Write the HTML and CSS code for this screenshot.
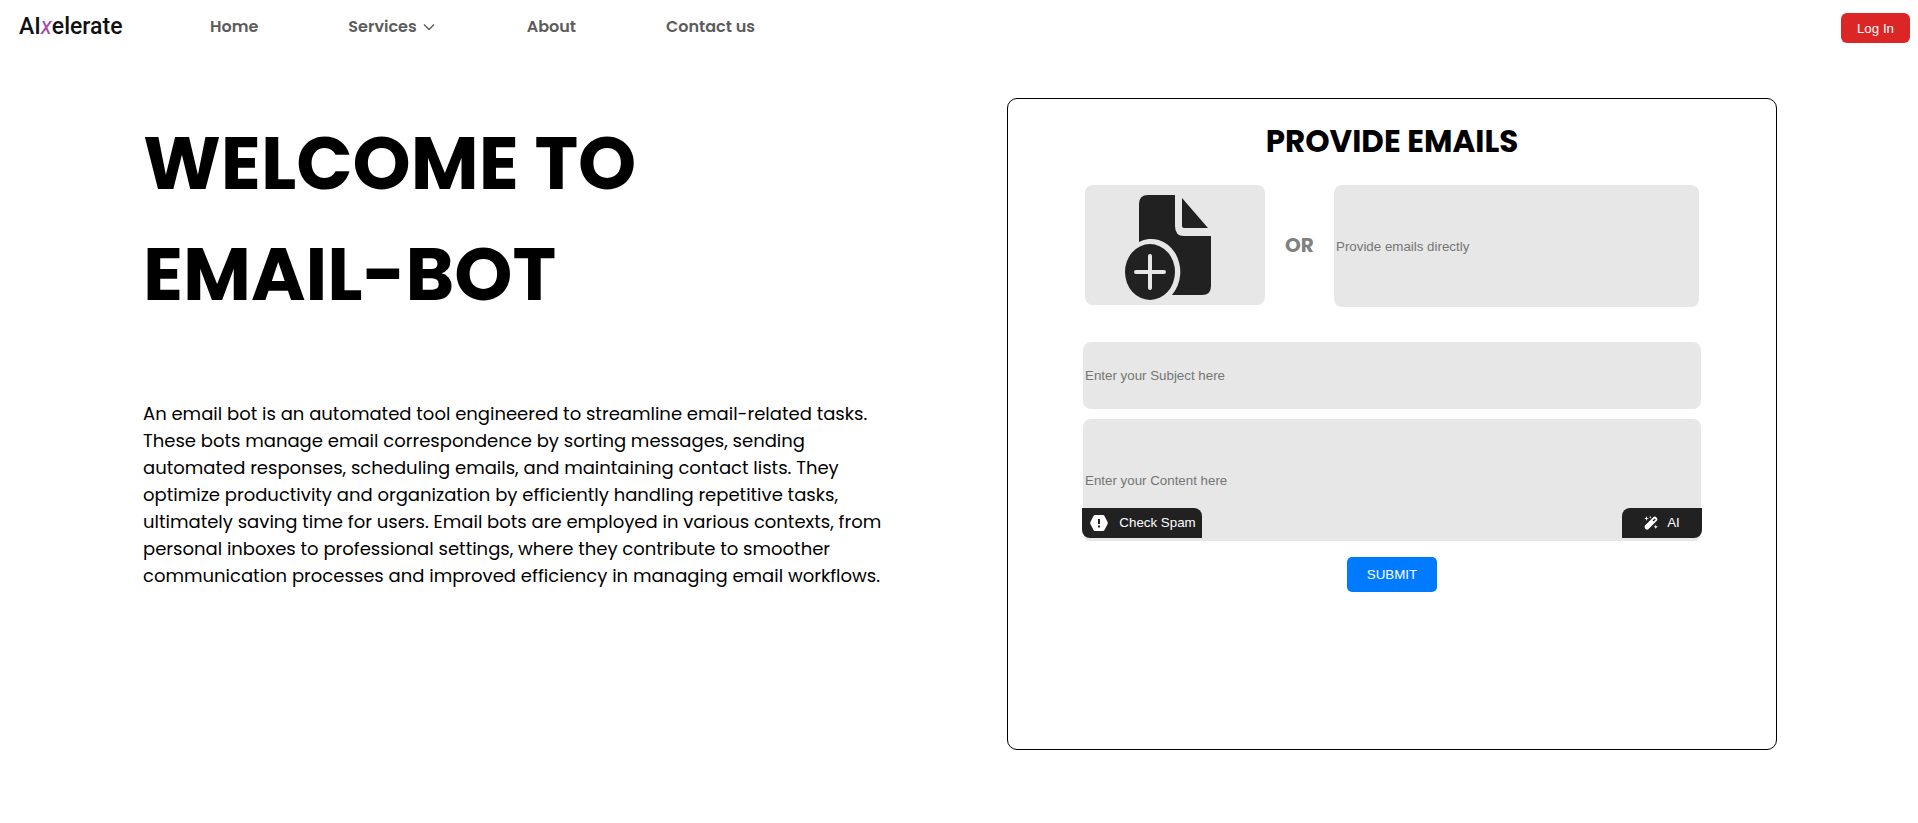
FILE: index.html
```html
<!DOCTYPE html>
<html lang="en">
<head>
<meta charset="utf-8">
<meta name="viewport" content="width=device-width, initial-scale=1">
<title>Email-Bot</title>
<link rel="stylesheet" href="styles.css">
</head>
<body>
<header class="header">
  <a class="logo" href="#">AI<span class="logo-x">x</span>elerate</a>
  <nav class="nav">
    <a href="#">Home</a>
    <a href="#" class="nav-menu">Services
      <svg class="chevron" viewBox="0 0 12 8" aria-hidden="true"><path d="M1 1.5 6 6.5 11 1.5" fill="none" stroke="currentColor" stroke-width="1.4"/></svg>
    </a>
    <a href="#">About</a>
    <a href="#">Contact us</a>
  </nav>
  <button class="login" type="button">Log In</button>
</header>
<main class="main">
  <section class="intro">
    <h1>WELCOME TO<br>EMAIL-BOT</h1>
    <p>An email bot is an automated tool engineered to streamline email-related tasks.<br>These bots manage email correspondence by sorting messages, sending<br>automated responses, scheduling emails, and maintaining contact lists. They<br>optimize productivity and organization by efficiently handling repetitive tasks,<br>ultimately saving time for users. Email bots are employed in various contexts, from<br>personal inboxes to professional settings, where they contribute to smoother<br>communication processes and improved efficiency in managing email workflows.</p>
  </section>
  <form class="card">
    <h2>PROVIDE EMAILS</h2>
    <div class="sources">
      <button class="upload" type="button" aria-label="Upload email file">
        <svg class="upload-icon" viewBox="0 0 87 107" aria-hidden="true">
          <path fill="#212121" d="M23 1H50V32Q50 42 59 42H86V92Q86 101 77 101H47A29 33 0 0 0 14 48V10Q14 1 23 1Z"/>
          <path fill="#212121" d="M57 4 83 34H59Q57 34 57 32Z"/>
          <ellipse cx="25" cy="78" rx="25" ry="28" fill="#212121"/>
          <path d="M25 62V94M11 78H39" stroke="#e7e7e7" stroke-width="4" stroke-linecap="round"/>
        </svg>
      </button>
      <span class="or">OR</span>
      <input class="field direct" type="text" placeholder="Provide emails directly" aria-label="Provide emails directly">
    </div>
    <input class="field subject" type="text" placeholder="Enter your Subject here" aria-label="Subject">
    <div class="content">
      <input class="field body" type="text" placeholder="Enter your Content here" aria-label="Content">
      <button class="tool spam" type="button">
        <svg class="spam-icon" viewBox="0 0 18 16" aria-hidden="true"><path fill="#fff" d="M5 0H13Q14 0 14.500 1L17.600 7Q18 8 17.600 9L14.500 15Q14 16 13 16H5Q4 16 3.500 15L.4 9Q0 8 .4 7L3.500 1Q4 0 5 0Z"/><path fill="#212121" d="M8 4H10V9H8ZM8 10.500H10V12.500H8Z"/></svg>
        Check Spam
      </button>
      <button class="tool ai" type="button">
        <svg class="wand-icon" viewBox="0 0 14 14" aria-hidden="true"><path fill="#fff" fill-rule="evenodd" d="M9.500 1Q11 0 12.500 1.500T13 4.500L4.500 13Q3 14.500 1.500 13T1 9.500ZM10.600 2.400 8.600 4.400 9.700 5.500 11.700 3.500Z"/><path fill="#fff" d="M2.500 0 3.100 1.900 5 2.500 3.100 3.100 2.500 5 1.900 3.100 0 2.500 1.900 1.900ZM11.800 8.500 12.300 10.200 14 10.800 12.300 11.400 11.800 13 11.200 11.400 9.500 10.800 11.200 10.200ZM6.200 0 6.600.8 7.400 1.200 6.600 1.600 6.200 2.400 5.800 1.600 5 1.200 5.800.8Z"/></svg>
        AI
      </button>
    </div>
    <button class="submit" type="submit">SUBMIT</button>
  </form>
</main>
</body>
</html>
```
FILE: styles.css
```css
* {
  box-sizing: border-box;
}

body {
  margin: 0;
  background: #fff;
  color: #000;
  font-family: Poppins, Inter, sans-serif;
}

button,
input {
  border: 0;
  font-family: "Liberation Sans", Arial, sans-serif;
}

button {
  padding: 0 0 1px;
  cursor: pointer;
}

.header {
  display: flex;
  align-items: center;
  height: 54px;
  padding: 0 8px 0 19px;
}

.logo {
  width: 191px;
  color: #111;
  font-family: Roboto, sans-serif;
  font-size: 23px;
  font-weight: 500;
  line-height: 28px;
  text-decoration: none;
}

.logo-x {
  color: #a349a4;
  font-style: italic;
  font-weight: 400;
}

.nav {
  display: flex;
  gap: 90px;
  margin-right: auto;
}

.nav a {
  color: #5c5c5c;
  font-size: 16px;
  font-weight: 600;
  line-height: 24px;
  text-decoration: none;
}

.nav-menu {
  display: flex;
  align-items: center;
  gap: 6px;
}

.chevron {
  width: 12px;
  height: 8px;
  margin-right: 2px;
}

.login {
  height: 30px;
  margin-top: 2px;
  padding: 0 16px;
  border-radius: 6px;
  background: #dc2626;
  color: #fff;
}

.main {
  display: grid;
  grid-template-columns: minmax(0, 744fr) minmax(0, 770fr);
  gap: 120px;
  align-items: start;
  padding: 44px 141px 73px 143px;
}

.intro h1 {
  margin: 10px 0 70px;
  font-size: 74px;
  font-weight: 700;
  line-height: 111px;
}

.intro p {
  margin: 0;
  font-size: 18px;
  line-height: 27px;
}

.card {
  display: flex;
  flex-direction: column;
  align-items: center;
  min-height: 652px;
  padding: 18px 75px;
  border: 1px solid #000;
  border-radius: 10px;
}

.card h2 {
  margin: 0 0 20px;
  font-size: 31px;
  font-weight: 700;
  line-height: 48px;
}

.sources {
  display: flex;
  width: 100%;
  margin-bottom: 35px;
  padding: 0 2px;
}

.upload {
  flex: 0 0 180px;
  height: 120px;
  padding: 0;
  border-radius: 8px;
  background: #e7e7e7;
}

.upload-icon {
  display: block;
  width: 87px;
  height: 107px;
  margin: 5px 0 0 40px;
}

.or {
  flex: 0 0 69px;
  align-self: center;
  padding-bottom: 2px;
  color: #808080;
  font-size: 20px;
  font-weight: 700;
  text-align: center;
}

.field {
  width: 100%;
  padding: 1px 2px;
  border-radius: 8px;
  background: #e7e7e7;
}

.field::placeholder {
  color: #757575;
}

.direct {
  flex: 1;
  min-width: 0;
  height: 122px;
}

.subject {
  height: 67px;
  margin-bottom: 10px;
}

.content {
  position: relative;
  width: 100%;
  margin-bottom: 16px;
}

.body {
  display: block;
  height: 122px;
}

.tool {
  position: absolute;
  bottom: 3px;
  display: flex;
  align-items: center;
  justify-content: center;
  height: 30px;
  background: #212121;
  color: #fff;
}

.spam {
  left: -1px;
  gap: 11px;
  width: 120px;
  padding-left: 2px;
  border-radius: 0 8px 0 8px;
}

.ai {
  right: -1px;
  gap: 9px;
  width: 80px;
  border-radius: 8px 0 8px 0;
}

.spam-icon {
  width: 18px;
  height: 16px;
}

.wand-icon {
  width: 14px;
  height: 14px;
}

.submit {
  width: 90px;
  height: 35px;
  border-radius: 5px;
  background: #007bff;
  color: #fff;
}
```
